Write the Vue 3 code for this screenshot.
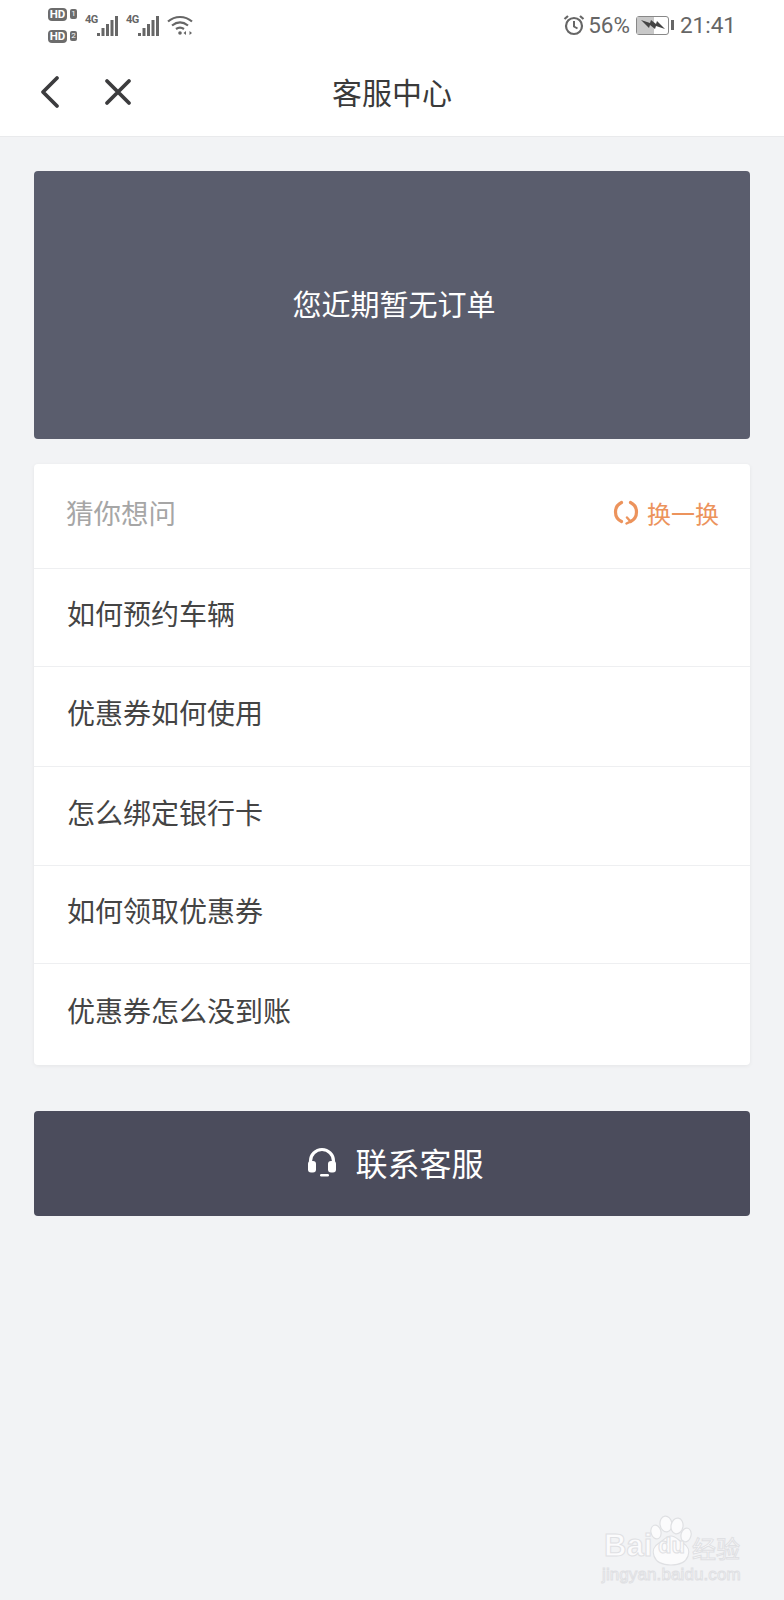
<script setup>
const questions = [
  { text: '如何预约车辆', height: 98 },
  { text: '优惠券如何使用', height: 100 },
  { text: '怎么绑定银行卡', height: 99 },
  { text: '如何领取优惠券', height: 98 },
  { text: '优惠券怎么没到账', height: 102 },
];
const sims = [1, 2];
</script>

<template>
  <div class="page">
    <div class="status">
      <div class="status-left">
        <div class="hd-col">
          <div class="hd-row" v-for="n in sims" :key="n">
            <span class="hd">HD</span><span class="hd-num">{{ n }}</span>
          </div>
        </div>
        <div class="signal" v-for="n in sims" :key="n">
          <span class="tag">4G</span>
          <svg width="21" height="21" viewBox="0 0 21 21" fill="#666">
            <rect x="0" y="18" width="3" height="3" />
            <rect x="4.500" y="13" width="3" height="8" />
            <rect x="9" y="9" width="3" height="12" />
            <rect x="13.500" y="5" width="3" height="16" />
            <rect x="18" y="1" width="3" height="20" />
          </svg>
        </div>
        <svg class="wifi" width="26" height="22" viewBox="0 0 26 22" fill="none" stroke="#666" stroke-width="2.200">
          <path d="M1 7.500C8 1.500 18 1.500 25 7.500" />
          <path d="M5 11.500C10 7.500 16 7.500 21 11.500" />
          <path d="M9 15C11.500 13.200 14.500 13.200 17 15" />
          <circle cx="13" cy="19" r="1.800" fill="#666" stroke="none" />
          <path d="M16.500 19l2.500-2v4zM25 19l-2.500-2v4z" fill="#666" stroke="none" />
        </svg>
      </div>
      <div class="status-right">
        <svg width="22" height="22" viewBox="0 0 22 22" fill="none" stroke="#666" stroke-width="2.200">
          <circle cx="11" cy="12" r="8" />
          <path d="M11 7v5.500l3.500 2" stroke-width="2" />
          <path d="M1.500 5L5 2M20.500 5L17 2" />
        </svg>
        <span class="pct">56%</span>
        <div class="battery">
          <div class="battery-body">
            <div class="battery-fill"></div>
            <svg class="bolt" width="26" height="12" viewBox="0 0 26 12" fill="#444">
              <path d="M1 1l9 3 1-3 5 4 1-3 8 8-9-3-1 3-5-4-1 3z" />
            </svg>
          </div>
          <div class="battery-cap"></div>
        </div>
        <span class="clock">21:41</span>
      </div>
    </div>

    <div class="nav">
      <svg class="back" width="22" height="34" viewBox="0 0 22 34" fill="none" stroke="#3c3c3e" stroke-width="3.800" stroke-linecap="round" stroke-linejoin="round">
        <path d="M18 3L4 17l14 14" />
      </svg>
      <svg class="close" width="28" height="28" viewBox="0 0 28 28" fill="none" stroke="#3c3c3e" stroke-width="3.800" stroke-linecap="round">
        <path d="M3 3l22 22M25 3L3 25" />
      </svg>
      <h1 class="title">客服中心</h1>
    </div>

    <main class="content">
      <div class="order-card">您近期暂无订单</div>

      <div class="list-card">
        <div class="list-head">
          <span class="guess">猜你想问</span>
          <span class="swap">
            <svg width="26" height="26" viewBox="0 0 26 26" fill="none" stroke="#ec935c" stroke-width="3.200" stroke-linecap="round">
              <path d="M8.500 3.500C5 5.200 2.500 8.800 2.500 13c0 4.200 2.500 7.800 6 9.500" />
              <path d="M17.500 3.500c3.500 1.700 6 5.300 6 9.500 0 4.200-2.500 7.800-6 9.500" />
              <path d="M14 18.500l3.500 4-4 2" stroke-width="2.400" />
            </svg>
            换一换
          </span>
        </div>
        <div class="row" v-for="q in questions" :key="q.text" :style="{ height: q.height + 'px' }">{{ q.text }}</div>
      </div>

      <button class="contact" type="button">
        <svg width="30" height="30" viewBox="0 0 30 30" fill="none">
          <path d="M3.500 18V14a11.500 11.500 0 0 1 23 0v4" stroke="#fff" stroke-width="3.200" />
          <rect x="1" y="14" width="8" height="11.500" rx="3" fill="#fff" />
          <rect x="21" y="14" width="8" height="11.500" rx="3" fill="#fff" />
          <rect x="13" y="27" width="9" height="2.400" rx="1.200" fill="#fff" />
        </svg>
        <span>联系客服</span>
      </button>
    </main>

    <div class="watermark">
      <svg class="paw" width="46" height="56" viewBox="0 0 46 56" fill="#fbfbfc" stroke="#dfe0e3" stroke-width="1.200">
        <ellipse cx="8" cy="18" rx="5" ry="7" transform="rotate(-15 8 18)" />
        <ellipse cx="18" cy="10" rx="6" ry="8" transform="rotate(-8 18 10)" />
        <ellipse cx="29" cy="12" rx="6" ry="8" transform="rotate(10 29 12)" />
        <ellipse cx="38" cy="21" rx="5" ry="7" transform="rotate(15 38 21)" />
        <path d="M23 22c5 0 7 4 12 7 5 3 7 8 5 13-2 6-8 9-17 9s-15-3-17-9c-2-5 0-10 5-13 5-3 7-7 12-7z" />
      </svg>
      <span class="wm-bai">Bai</span>
      <span class="wm-du">du</span>
      <span class="wm-cn">经验</span>
      <span class="wm-url">jingyan.baidu.com</span>
    </div>
  </div>
</template>

<style scoped>
.page {
  position: relative;
  width: 784px;
  height: 1600px;
  background: #f2f3f5;
  font-family: "Noto Sans CJK SC", "Noto Sans", sans-serif;
  overflow: hidden;
}

.status {
  height: 50px;
  background: #fff;
  display: flex;
  justify-content: space-between;
  align-items: center;
  padding: 0 48px 0 48px;
  font-family: Roboto, "Liberation Sans", sans-serif;
  color: #666;
}

.status-left,
.status-right {
  display: flex;
  align-items: center;
}

.hd-col {
  display: flex;
  flex-direction: column;
  gap: 9px;
  margin-right: 8px;
}

.hd-row {
  display: flex;
  align-items: center;
  gap: 3px;
}

.hd {
  width: 19px;
  height: 13px;
  border-radius: 4px;
  background: #6c6c6c;
  color: #fff;
  font-size: 11.500px;
  font-weight: 700;
  line-height: 13px;
  text-align: center;
}

.hd-num {
  width: 7px;
  height: 10px;
  border-radius: 2px;
  background: #6c6c6c;
  color: #fff;
  font-size: 8px;
  line-height: 10px;
  text-align: center;
}

.signal {
  display: flex;
  align-items: flex-start;
  margin-right: 8px;
}

.tag {
  width: 12px;
  font-size: 11px;
  font-weight: 700;
  line-height: 12px;
  margin-top: -1px;
  letter-spacing: -0.500px;
  white-space: nowrap;
}

.status-right {
  gap: 5px;
}

.pct {
  margin-left: -2px;
  font-size: 22.500px;
  line-height: 26px;
}

.battery {
  display: flex;
  align-items: center;
  gap: 2px;
  margin: 0 1px 0 1px;
}

.battery-body {
  position: relative;
  width: 31px;
  height: 17px;
  border: 1px solid #888;
  border-radius: 3px;
  background: #fff;
}

.battery-fill {
  width: 56%;
  height: 100%;
  background: #c8c8c8;
}

.bolt {
  position: absolute;
  left: 3px;
  top: 2px;
}

.battery-cap {
  width: 3px;
  height: 10px;
  background: #666;
}

.clock {
  font-size: 22.500px;
  line-height: 26px;
}

.nav {
  position: relative;
  height: 86px;
  background: #fff;
  border-bottom: 1px solid #e9eaec;
  display: flex;
  align-items: center;
  justify-content: center;
}

.back {
  position: absolute;
  left: 39px;
  top: 25px;
}

.close {
  position: absolute;
  left: 104px;
  top: 28px;
}

.title {
  margin: 0 0 4px;
  font-size: 30px;
  font-weight: 400;
  color: #3a3a3a;
}

.content {
  padding: 34px 34px 0;
}

.order-card {
  height: 268px;
  padding: 0 0 4px 4px;
  box-sizing: border-box;
  background: #5a5d6d;
  border-radius: 4px;
  color: #fff;
  font-size: 29px;
  display: flex;
  align-items: center;
  justify-content: center;
}

.list-card {
  margin-top: 25px;
  background: #fff;
  border-radius: 4px;
  box-shadow: 0 1px 4px rgba(0, 0, 0, 0.06);
}

.list-head {
  height: 104px;
  display: flex;
  align-items: center;
  justify-content: space-between;
  padding: 0 31px 8px 32px;
  box-sizing: border-box;
}

.guess {
  font-size: 27.500px;
  color: #a6a6a6;
}

.swap {
  display: flex;
  align-items: center;
  gap: 8px;
  font-size: 24px;
  color: #ec935c;
}

.row {
  border-top: 1px solid #eeeff1;
  padding: 0 0 9px 33px;
  display: flex;
  align-items: center;
  font-size: 28px;
  color: #444;
  box-sizing: border-box;
}

.contact {
  width: 100%;
  height: 105px;
  margin-top: 46px;
  border: none;
  border-radius: 4px;
  background: #4b4c5c;
  color: #fff;
  font-family: inherit;
  font-size: 32px;
  display: flex;
  align-items: center;
  justify-content: center;
  gap: 18px;
  padding: 0 0 4px 7px;
}

.watermark {
  position: absolute;
  left: 602px;
  top: 1514px;
  width: 160px;
  height: 72px;
  color: #fbfbfc;
  font-family: "Liberation Sans", sans-serif;
  -webkit-text-stroke: 1px #dfe0e3;
  white-space: nowrap;
}

.paw {
  position: absolute;
  left: 46px;
  top: 0;
}

.wm-bai {
  position: absolute;
  left: 2px;
  top: 12px;
  font-size: 31px;
  font-weight: 700;
  line-height: 40px;
}

.wm-du {
  position: absolute;
  left: 56px;
  top: 19px;
  font-size: 22px;
  font-weight: 700;
  line-height: 26px;
}

.wm-cn {
  position: absolute;
  left: 90px;
  top: 16px;
  font-family: "Noto Sans CJK SC", sans-serif;
  font-size: 24px;
  line-height: 36px;
}

.wm-url {
  position: absolute;
  left: 0;
  top: 51px;
  font-size: 17px;
  letter-spacing: 0.100px;
  line-height: 20px;
}
</style>
